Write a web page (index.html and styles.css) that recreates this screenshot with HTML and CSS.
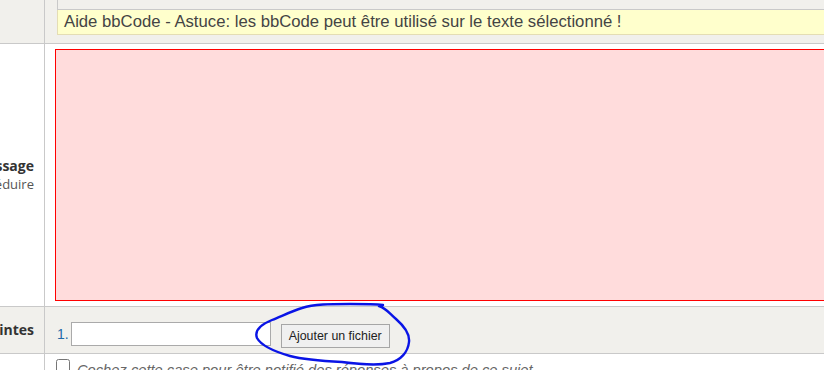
FILE: index.html
```html
<!DOCTYPE html>
<html lang="fr">
<head>
    <meta charset="UTF-8">
    <title>Poster un message</title>
    <link rel="stylesheet" href="styles.css">
</head>
<body>
    <div class="post-form">
        <!-- bbCode toolbar + hint -->
        <div class="form-row row-grey row-toolbar">
            <div class="label-cell"></div>
            <div class="field-cell">
                <div class="toolbar"></div>
                <div class="hint">Aide bbCode - Astuce: les bbCode peut être utilisé sur le texte sélectionné !</div>
            </div>
        </div>

        <!-- Message -->
        <div class="form-row row-message">
            <div class="label-cell">
                <span class="label-title">Message</span>
                <span class="label-sub">Agrandir / Réduire</span>
            </div>
            <div class="field-cell">
                <textarea class="message-box"></textarea>
            </div>
        </div>

        <!-- Attachments -->
        <div class="form-row row-grey row-attach">
            <div class="label-cell">
                <span class="label-title">Pièces jointes</span>
            </div>
            <div class="field-cell attach-cell">
                <span class="attach-num">1.</span>
                <input type="text" class="attach-input">
                <button class="attach-btn">Ajouter un fichier</button>
            </div>
        </div>

        <!-- Subscribe -->
        <div class="form-row row-notify">
            <div class="label-cell">
                <span class="label-title">S'abonner</span>
            </div>
            <div class="field-cell notify-cell">
                <input type="checkbox" class="notify-check">
                <span class="notify-text">Cochez cette case pour être notifié des réponses à propos de ce sujet</span>
            </div>
        </div>
    </div>

    <!-- hand drawn circle round the button -->
    <svg class="scribble" width="824" height="370" viewBox="0 0 824 370">
        <path d="M379 306 C386 308 390 314 396 319 C404 326 410 334 409 342 C408 352 401 360 390 363 C375 366 358 364 342 362 C322 361 305 360 290 356 C276 352 262 347 257 338 C254 330 262 324 272 320 C282 316 292 311 302 308 C314 304 330 304 350 304 C362 304 374 304 383 305"
              fill="none" stroke="#0a14e6" stroke-width="2.4" stroke-linecap="round" stroke-linejoin="round"/>
    </svg>
</body>
</html>
```

FILE: styles.css
```css
/* General */
body {
    margin: 0;
    overflow: hidden;
    background-color: #ffffff;
    font-family: "Liberation Sans", Arial, sans-serif;
    color: #333333;
}

.post-form {
    width: 960px;
}

/* Rows */
.form-row {
    display: grid;
    grid-template-columns: 45px 1fr;
    border-bottom: 1px solid #c9c9c9;
}
.row-grey {
    background-color: #f1f0ec;
}

.label-cell {
    border-right: 1px solid #c9c9c9;
    display: flex;
    flex-direction: column;
    justify-content: center;
    align-items: flex-end;
    padding-right: 10px;
    overflow: hidden;
    white-space: nowrap;
    font-family: "Open Sans", sans-serif;
    font-size: 14px;
    line-height: 18px;
}
.label-title {
    font-weight: bold;
    color: #333333;
}
.label-sub {
    font-size: 13px;
    color: #555555;
}

/* Toolbar row */
.row-toolbar {
    height: 43px;
}
.row-toolbar .field-cell {
    padding-left: 12px;
}
.toolbar {
    height: 9px;
    border-left: 1px solid #c9c9c9;
    border-bottom: 1px solid #c9c9c9;
}
.hint {
    height: 24px;
    line-height: 23px;
    padding-left: 6px;
    background-color: #ffffcc;
    border-left: 1px solid #e4ddb4;
    border-bottom: 1px solid #e4ddb4;
    font-size: 16.7px;
    color: #444444;
    white-space: nowrap;
}

/* Message row */
.row-message {
    height: 262px;
}
.row-message .field-cell {
    padding: 5px 0 5px 10px;
}
.message-box {
    display: block;
    box-sizing: border-box;
    width: 100%;
    height: 252px;
    margin: 0;
    border: 1px solid #ff0000;
    background-color: #ffdcdc;
    resize: none;
}

/* Attachments */
.row-attach {
    height: 46px;
}
.attach-cell {
    display: flex;
    align-items: flex-start;
    padding: 15px 0 0 12px;
}
.attach-num {
    color: #1f6aa8;
    font-size: 14px;
    line-height: 24px;
    margin-right: 2px;
}
.attach-input {
    box-sizing: border-box;
    width: 200px;
    height: 24px;
    margin: 0;
    border: 1px solid #aaaaaa;
    background-color: #ffffff;
}
.attach-btn {
    box-sizing: border-box;
    height: 24px;
    width: 109px;
    margin: 2px 0 0 10px;
    padding: 0;
    border: 1px solid #a6a6a6;
    background-color: #f0f0f0;
    font-family: "Liberation Sans", Arial, sans-serif;
    font-size: 12.4px;
    color: #222222;
}

/* Subscribe */
.row-notify {
    height: 40px;
}
.notify-cell {
    display: flex;
    align-items: flex-start;
    padding: 5px 0 0 11px;
}
.notify-check {
    width: 14px;
    height: 14px;
    margin: 0 7px 0 0;
}
.notify-text {
    font-style: italic;
    font-size: 14.7px;
    color: #666666;
    line-height: 22px;
}

/* Scribble overlay */
.scribble {
    position: absolute;
    top: 0;
    left: 0;
    pointer-events: none;
}
```
